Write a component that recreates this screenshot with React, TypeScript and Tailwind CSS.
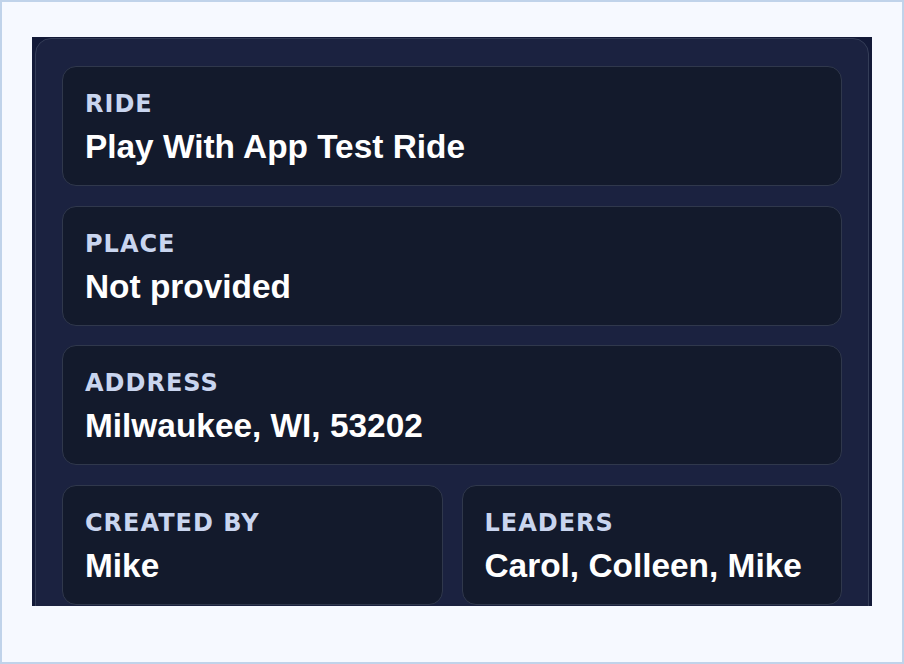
import React from "react";

function Field({ label, value }: { label: string; value: string }) {
  return (
    <div className="h-[120px] rounded-[14px] border border-[#30384c] bg-[#131a2c] pl-[22px] pr-4 pt-[23px]">
      <div className="font-['DejaVu_Sans',sans-serif] text-[24px] leading-[28px] font-bold uppercase tracking-[1px] text-[#c9d5ef]">
        {label}
      </div>
      <div className="mt-[9px] font-['Liberation_Sans',Arial,sans-serif] text-[33.4px] leading-[40px] font-bold text-white">
        {value}
      </div>
    </div>
  );
}

export default function App() {
  return (
    <div className="h-[664px] w-[904px] overflow-hidden border-2 border-[#c0d3ea] bg-[#f6f9ff] pl-[30px] pt-[35px] font-['Liberation_Sans',Arial,sans-serif]">
      <div className="h-[569px] w-[840px] overflow-hidden bg-[#131a38] pl-[3px] pr-[3px] pt-[1px]">
        <div className="rounded-[16px] border border-[#343d57] bg-[#1b2240] px-[26px] pt-[27px] pb-[30px]">
          <div className="flex flex-col gap-[19.5px]">
            <Field label="Ride" value="Play With App Test Ride" />
            <Field label="Place" value="Not provided" />
            <Field label="Address" value="Milwaukee, WI, 53202" />
            <div className="grid grid-cols-2 gap-[19px]">
              <Field label="Created By" value="Mike" />
              <Field label="Leaders" value="Carol, Colleen, Mike" />
            </div>
          </div>
        </div>
      </div>
    </div>
  );
}
